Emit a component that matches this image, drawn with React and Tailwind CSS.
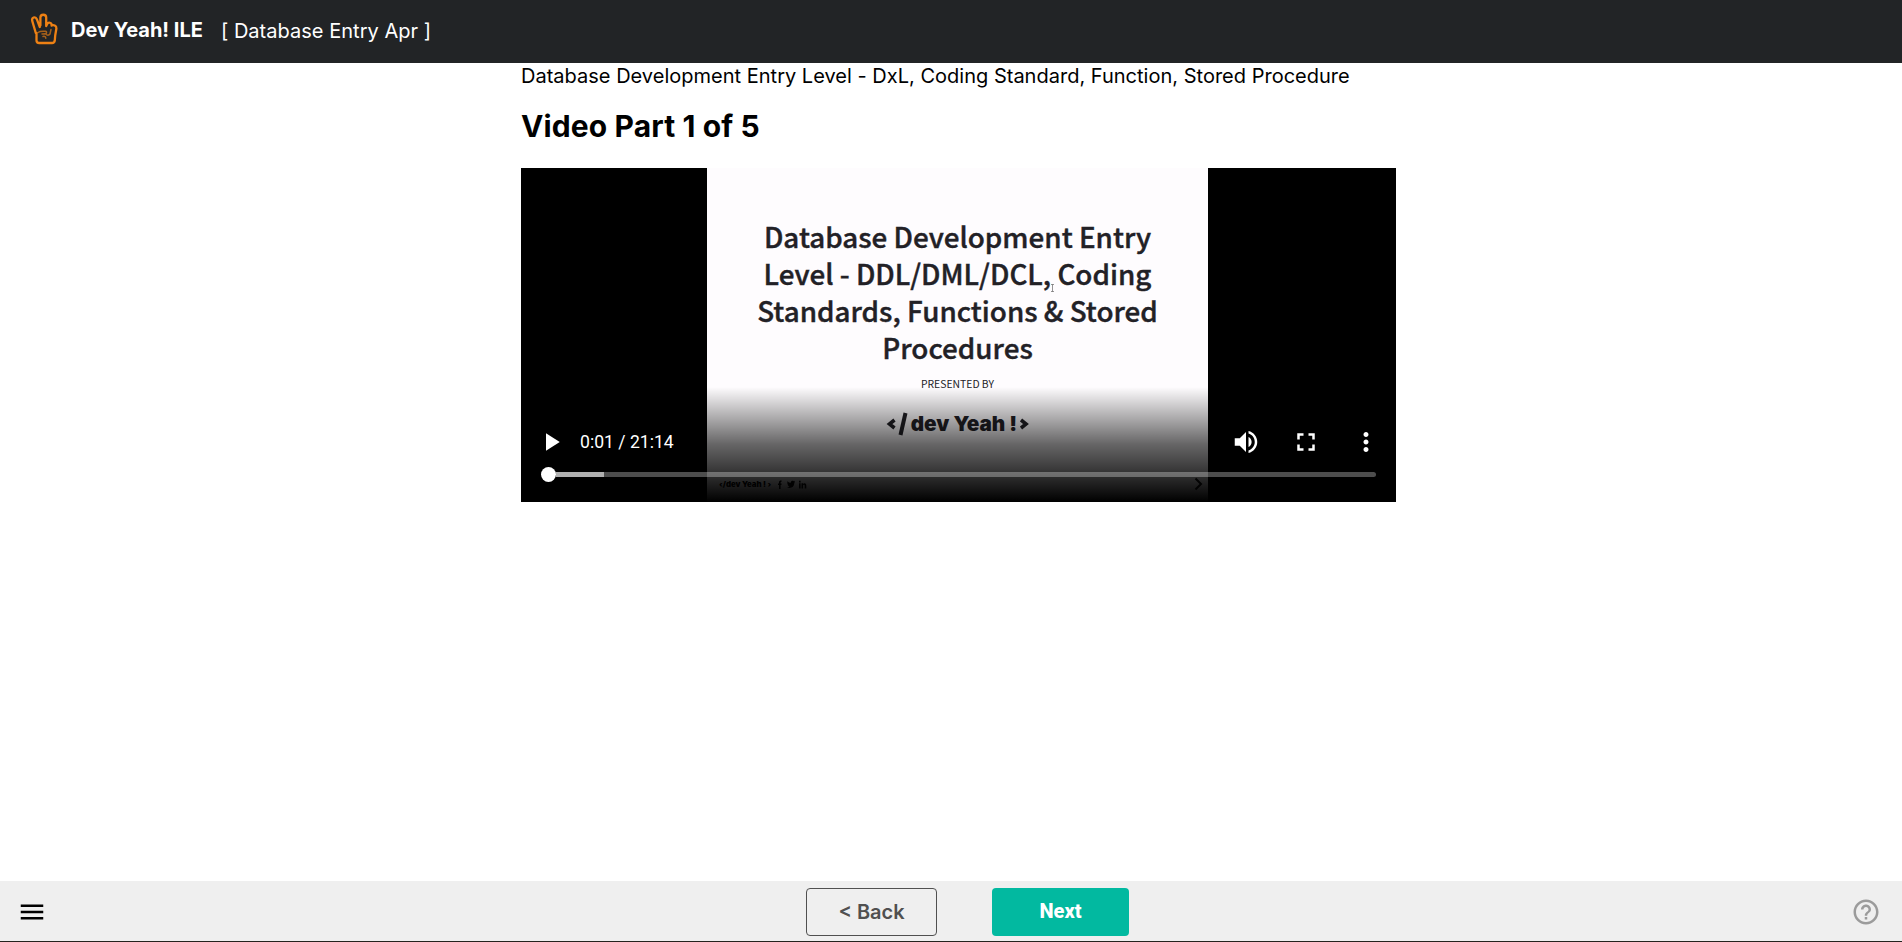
import React from "react";

function HandLogo() {
  return (
    <svg className="h-8 w-7 shrink-0" viewBox="0 0 28 32" fill="none" stroke="#ee8114" strokeWidth="2.3" strokeLinecap="round" strokeLinejoin="round">
      <path d="M5.8 20 2.3 8.2C1.2 4.4 5.4 2.9 6.8 6.2L9.8 14 M10.4 12.500V4.600C10.4.8 16.2.8 16.2 4.600V12.500 M16.2 13 17.2 11C18.3 8.700 21.8 9.600 21.6 12.200 M21.6 12.600C23.4 11.600 26.6 12.500 26.4 15.500L25.2 22.500 24.800 27.500C24.500 29.200 23.600 30 22.100 30H9.200C7.300 30 6.500 29.200 6.500 27.500V20" />
      <path strokeWidth="1.500" opacity=".65" d="M8 19.500C10 17.800 12.500 18.300 15.500 18.200 17 18.300 17 20.500 15.200 20.700L12 21M15.800 21C17 22.500 19 22.500 20 21L21 16.500M13 23.500C14.800 22.800 15.800 24 15.800 25.200" />
    </svg>
  );
}

function Header() {
  return (
    <header className="flex h-[63px] shrink-0 items-center bg-[#222426] pl-[30px] text-white">
      <div className="flex h-full items-start pt-[13px]">
        <HandLogo />
      </div>
      <span className="ml-[13px] -mt-[3px] whitespace-nowrap text-[20px] leading-6 font-bold">Dev Yeah! ILE</span>
      <span className="ml-[18px] -mt-px whitespace-nowrap text-[20px] leading-6 tracking-[0.03px]">[ Database Entry Apr ]</span>
    </header>
  );
}

function Slide() {
  return (
    <div className="flex h-full w-[501px] flex-col items-center bg-[#fefcfe] pt-[50px] text-[#222126]">
      <h2 className="text-center font-['Noto_Sans_CJK_JP','Noto_Sans_CJK_SC',sans-serif] text-[27.8px] leading-[37px] font-medium whitespace-nowrap [-webkit-text-stroke:0.4px]">
        Database Development Entry<br />
        Level - DDL/DML/DCL, Coding<br />
        Standards, Functions &amp; Stored<br />
        Procedures
      </h2>
      <p className="mt-[11px] font-['Noto_Sans_CJK_JP',sans-serif] text-[10.4px] leading-[14px]">PRESENTED BY</p>
      <p className="mt-[18px] flex items-center gap-[3px] text-[20.7px] leading-[30px] font-black whitespace-nowrap">
        <svg className="h-6 w-[22px]" viewBox="0 0 22 24" fill="none" stroke="#222126"><path strokeWidth="3.6" d="M8.5 8 3.500 12 8.5 16" /><path strokeWidth="4" d="M19.5 1 14.500 23" /></svg>
        <span>dev Yeah !</span>
        <svg className="h-6 w-[9px]" viewBox="0 0 9 24" fill="none" stroke="#222126"><path strokeWidth="3.6" d="M1 8 6 12 1 16" /></svg>
      </p>
      <div className="mt-auto mb-[11px] flex w-full items-center pr-[5px] pl-[12px] text-black">
        <span className="text-[7.8px] leading-[12px] font-black whitespace-nowrap">‹/dev Yeah ! ›</span>
        <svg className="ml-[6px] h-[9px] w-[30px]" viewBox="0 0 30 9" fill="#080808">
          <path d="M2 9V5H1V3.4H2V2.2C2 .8 2.8.3 4.6.4V1.8C3.8 1.8 3.6 2 3.6 2.5V3.4H4.6L4.4 5H3.6V9Z" />
          <path d="M10.5 1.2C11.5 2.3 12.6 2.7 13.8 2.7 13.8.7 15.8.2 16.8 1.2L18 .8 17.4 1.9 18.2 1.8 17.3 2.8C17.4 7.5 13 9 10 7.3 11.2 7.3 12 7 12.5 6.5 11.5 6.3 11 5.8 10.8 5.2H11.6C10.6 4.8 10.2 4.1 10.2 3.3L11 3.5C10.2 2.8 10.1 2 10.5 1.2Z" />
          <path d="M22 3.3H23.6V8.5H22ZM22 .8H23.6V2.4H22ZM24.5 3.3H26V4C27 2.7 29.3 3 29.3 5.4V8.5H27.7V5.8C27.7 4.2 26.1 4.3 26.1 5.8V8.5H24.5Z" />
        </svg>
        <svg className="ml-auto h-[14px] w-[9px]" viewBox="0 0 9 14" fill="none" stroke="#111" strokeWidth="2"><path d="M1.5 1.5 7 7 1.5 12.5" /></svg>
      </div>
    </div>
  );
}

function VideoControls() {
  return (
    <div className="absolute inset-0 flex flex-col justify-end text-white">
      <div className="flex h-[115px] flex-col bg-linear-to-b from-black/0 via-black/60 to-black pt-[35px]">
        <div className="flex h-[40px] items-center pr-[15px] pl-[15px]">
          <svg className="h-[30px] w-[30px]" viewBox="0 0 24 24" fill="currentColor"><path d="M8 5v14l11-7z" /></svg>
          <span className="ml-[14px] font-[Roboto,sans-serif] text-[17.6px] leading-6">0:01 / 21:14</span>
          <div className="ml-auto flex items-center gap-[30px]">
            <svg className="h-[30px] w-[30px]" viewBox="0 0 24 24" fill="currentColor"><path d="M3 9v6h4l5 5V4L7 9H3zm13.500 3c0-1.770-1.020-3.290-2.500-4.030v8.050c1.480-.730 2.500-2.250 2.500-4.020zM14 3.230v2.060c2.890.860 5 3.540 5 6.710s-2.110 5.850-5 6.710v2.060c4.010-.910 7-4.490 7-8.770s-2.990-7.860-7-8.770z" /></svg>
            <svg className="h-[30px] w-[30px]" viewBox="0 0 24 24" fill="currentColor"><path d="M7 14H5v5h5v-2H7v-3zm-2-4h2V7h3V5H5v5zm12 7h-3v2h5v-5h-2v3zM14 5v2h3v3h2V5h-5z" /></svg>
            <svg className="h-[30px] w-[30px]" viewBox="0 0 24 24" fill="currentColor"><path d="M12 8c1.100 0 2-.9 2-2s-.9-2-2-2-2 .9-2 2 .9 2 2 2zm0 2c-1.100 0-2 .9-2 2s.9 2 2 2 2-.9 2-2-.9-2-2-2zm0 6c-1.100 0-2 .9-2 2s.9 2 2 2 2-.9 2-2-.9-2-2-2z" /></svg>
          </div>
        </div>
        <div className="mt-[5px] flex h-[15px] items-center pr-5 pl-5">
          <div className="size-[15px] shrink-0 rounded-full bg-white" />
          <div className="h-[5px] w-[48px] shrink-0 bg-[#b0b0b0]" />
          <div className="h-[5px] flex-1 rounded-r-full bg-white/30" />
        </div>
      </div>
    </div>
  );
}

function Footer() {
  return (
    <footer className="flex h-[61px] shrink-0 items-center border-b border-[#25231f] bg-[#efefef] pt-[2px] pr-[21px] pl-[17px]">
      <svg className="h-[30px] w-[30px]" viewBox="0 0 24 24" fill="#000"><path d="M3 18h18v-2H3v2zm0-5h18v-2H3v2zm0-7v2h18V6H3z" /></svg>
      <div className="ml-[759px] flex items-center gap-[55px]">
        <button className="h-12 w-[131px] rounded-[4px] border border-[#505050] text-[20px] leading-6 font-semibold text-[#505050]">&lt; Back</button>
        <button className="h-12 w-[137px] rounded-[4px] bg-[#02b9a0] pb-[3px] font-[Roboto,sans-serif] text-[20px] leading-6 font-extrabold text-white">Next</button>
      </div>
      <svg className="ml-auto h-[30px] w-[30px]" viewBox="0 0 24 24" fill="#9b9b9b"><path d="M11 18h2v-2h-2v2zm1-16C6.480 2 2 6.480 2 12s4.480 10 10 10 10-4.480 10-10S17.520 2 12 2zm0 18c-4.410 0-8-3.590-8-8s3.590-8 8-8 8 3.590 8 8-3.590 8-8 8zm0-14c-2.210 0-4 1.790-4 4h2c0-1.100.9-2 2-2s2 .9 2 2c0 2-3 1.750-3 5h2c0-2.250 3-2.500 3-5 0-2.210-1.790-4-4-4z" /></svg>
    </footer>
  );
}

export default function App() {
  return (
    <div className="flex h-screen flex-col overflow-hidden bg-white font-[Inter,sans-serif] text-black">
      <Header />
      <main className="ml-[521px] w-[875px] flex-1">
        <p className="text-[20px] leading-[26px] tracking-[0.01px] whitespace-nowrap">Database Development Entry Level - DxL, Coding Standard, Function, Stored Procedure</p>
        <h1 className="mt-[19px] text-[30px] leading-[36px] font-bold tracking-[0.12px] whitespace-nowrap">Video Part 1 of 5</h1>
        <div className="relative mt-[24px] h-[334px] bg-black pl-[186px]">
          <Slide />
          <svg className="absolute top-[116px] left-[529px] h-[8px] w-[5px]" viewBox="0 0 5 8" fill="none" stroke="#666" strokeWidth=".7"><path d="M1 .5H4M2.500.5V7.500M1 7.500H4" /></svg>
          <VideoControls />
        </div>
      </main>
      <Footer />
    </div>
  );
}
